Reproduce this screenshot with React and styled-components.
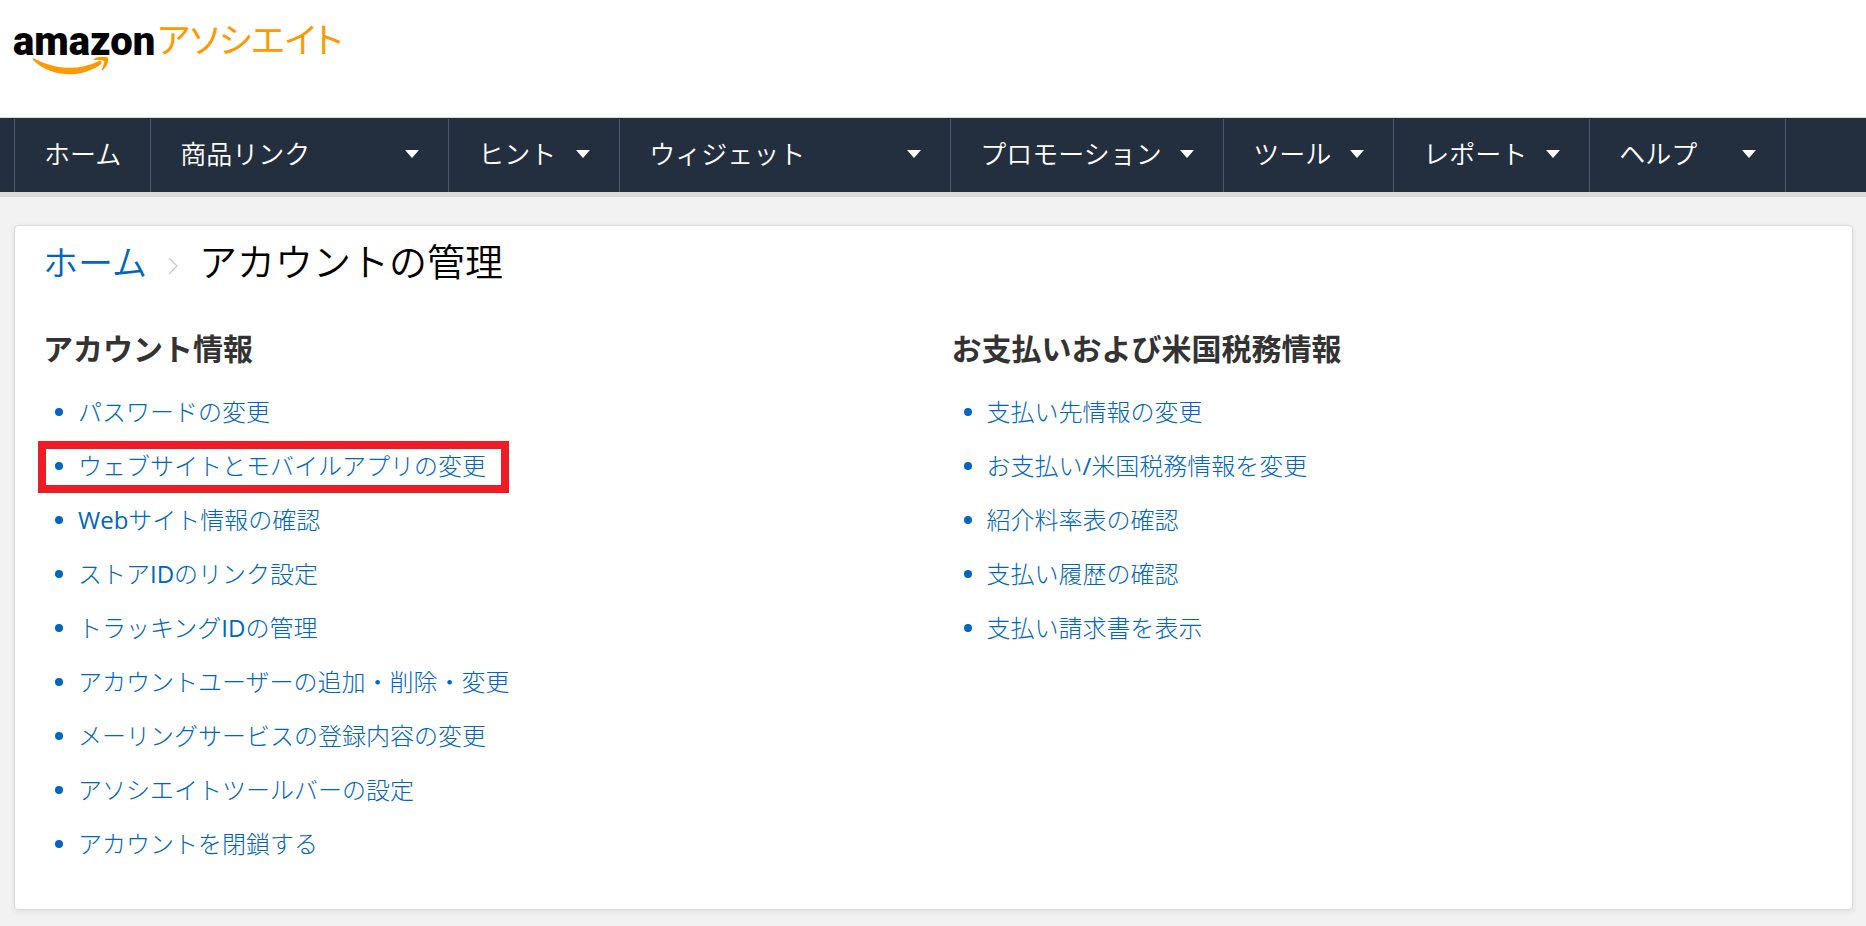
import React from 'react';
import styled, { createGlobalStyle, css } from 'styled-components';

const GlobalStyle = createGlobalStyle`
  * {
    box-sizing: border-box;
  }

  body {
    margin: 0;
    background-color: #f2f2f2;
    color: #333;
    font-family: 'Noto Sans', 'Noto Sans CJK JP', sans-serif;
    font-weight: 350;
  }
`;

const Header = styled.header`
  height: 118px;
  padding: 12px 13px;
  background-color: #fff;
  border-bottom: 1px solid #d5d9d9;
`;

const LogoLink = styled.a`
  display: inline-flex;
  align-items: flex-start;
  gap: 2px;
  text-decoration: none;
`;

const Wordmark = styled.span`
  position: relative;
  color: #000;
  font-family: Roboto, 'Liberation Sans', sans-serif;
  font-size: 40px;
  font-weight: 900;
  line-height: 60px;
`;

const Smile = styled.svg`
  position: absolute;
  left: 20px;
  top: 45px;
  width: 78px;
  height: 20px;
`;

const LogoSuffix = styled.span`
  color: #ff9900;
  font-family: 'Noto Sans CJK JP', sans-serif;
  font-size: 35px;
  font-weight: 400;
  font-feature-settings: 'palt';
  line-height: 52px;
`;

const Nav = styled.nav`
  display: flex;
  height: 79px;
  padding: 1px 0 0 14px;
  background-color: #232f3e;
  border-bottom: 5px solid #d9dad9;
`;

const navItem = css`
  display: flex;
  flex: 0 0 ${props => props.$width}px;
  align-items: center;
  justify-content: space-between;
  padding: 0 29px 4px;
  border: 0;
  border-left: 1px solid #4a5b71;
  background: none;
  color: #fff;
  font-family: inherit;
  font-size: 26px;
  font-weight: 350;
  line-height: 36px;
  white-space: nowrap;
  text-decoration: none;
  cursor: pointer;
`;

const NavLink = styled.a`
  ${navItem}
`;

const NavButton = styled.button`
  ${navItem}
`;

const NavEnd = styled.div`
  border-left: 1px solid #4a5b71;
`;

const Caret = styled.span`
  border: 7px solid transparent;
  border-top: 8px solid #fff;
  border-bottom: 0;
`;

const Card = styled.main`
  margin: 28px 13px 16px 14px;
  padding: 7px 30px 38px 28px;
  background-color: #fff;
  border: 1px solid #d9dada;
  border-radius: 4px;
  box-shadow: 0 2px 6px rgba(0, 0, 0, 0.08);
`;

const Breadcrumb = styled.nav`
  display: flex;
  align-items: baseline;
  line-height: 56px;
`;

const CrumbLink = styled.a`
  color: #0066c0;
  font-size: 35px;
  text-decoration: none;
`;

const Chevron = styled.svg`
  align-self: center;
  width: 10px;
  height: 18px;
  margin: 8px 21px 0;
`;

const PageTitle = styled.h1`
  margin: 0;
  color: #000;
  font-size: 38px;
  font-weight: 350;
`;

const Columns = styled.div`
  display: grid;
  grid-template-columns: 1fr 1fr;
  gap: 38px;
  margin-top: 38px;
`;

const SectionTitle = styled.h2`
  margin: 0 0 16px;
  font-size: 30px;
  font-weight: 700;
  line-height: 40px;
`;

const LinkList = styled.ul`
  margin: 0;
  padding: 0 0 0 12px;
  list-style: none;
`;

const LinkItem = styled.li`
  position: relative;
  display: flex;
  align-items: center;
  gap: 15px;
  width: fit-content;
  height: 54px;
  color: #0066c0;

  &::before {
    content: '';
    width: 8px;
    height: 8px;
    border-radius: 50%;
    background-color: #0066c0;
  }

  ${props => props.$marked && css`
    &::after {
      content: '';
      position: absolute;
      inset: 2px -23px 0 -17px;
      border: 8px solid #ee1c25;
      pointer-events: none;
    }
  `}
`;

// Regular latin letters next to light kana and kanji
const ItemLink = styled.a`
  color: inherit;
  font-family: 'Open Sans', 'Noto Sans CJK JP Light', 'Noto Sans CJK JP', sans-serif;
  font-size: 24px;
  font-weight: 400;
  line-height: 36px;
  text-decoration: none;
`;

const menuItems = [
  { label: '商品リンク', width: 298 },
  { label: 'ヒント', width: 171 },
  { label: 'ウィジェット', width: 331 },
  { label: 'プロモーション', width: 273 },
  { label: 'ツール', width: 170 },
  { label: 'レポート', width: 196 },
  { label: 'ヘルプ', width: 196 }
];

const sections = [
  {
    title: 'アカウント情報',
    links: [
      { label: 'パスワードの変更' },
      { label: 'ウェブサイトとモバイルアプリの変更', marked: true },
      { label: 'Webサイト情報の確認' },
      { label: 'ストアIDのリンク設定' },
      { label: 'トラッキングIDの管理' },
      { label: 'アカウントユーザーの追加・削除・変更' },
      { label: 'メーリングサービスの登録内容の変更' },
      { label: 'アソシエイトツールバーの設定' },
      { label: 'アカウントを閉鎖する' }
    ]
  },
  {
    title: 'お支払いおよび米国税務情報',
    links: [
      { label: '支払い先情報の変更' },
      { label: 'お支払い/米国税務情報を変更' },
      { label: '紹介料率表の確認' },
      { label: '支払い履歴の確認' },
      { label: '支払い請求書を表示' }
    ]
  }
];

const Logo = () => (
  <LogoLink href="#">
    <Wordmark>
      amazon
      <Smile viewBox="0 0 78 20" aria-hidden="true">
        <path
          d="M0 1 Q-1 2 1 4 C20 21 48 21 67 8 C70 6 68 3 66 4 C46 14 22 13 0 1 Z"
          fill="#ff9900"
        />
        <path
          d="M61 2 C65 -1 74 -1 75 1 C76 4 74 10 70 13 C69 14 68 13 69 12 C70 9 72 5 71 4 C70 3 66 3 62 3 C61 3 60 3 61 2 Z"
          fill="#ff9900"
        />
      </Smile>
    </Wordmark>
    <LogoSuffix>アソシエイト</LogoSuffix>
  </LogoLink>
);

const App = () => {
  return (
    <div lang="ja">
      <GlobalStyle />
      <Header>
        <Logo />
      </Header>

      <Nav>
        <NavLink href="#" $width={136}>ホーム</NavLink>
        {menuItems.map((item) => (
          <NavButton key={item.label} type="button" $width={item.width}>
            {item.label}
            <Caret />
          </NavButton>
        ))}
        <NavEnd />
      </Nav>

      <Card>
        <Breadcrumb>
          <CrumbLink href="#">ホーム</CrumbLink>
          <Chevron viewBox="0 0 10 18" aria-hidden="true">
            <path d="M1 1 L9 9 L1 17" fill="none" stroke="#c8c8c8" strokeWidth="1.3" />
          </Chevron>
          <PageTitle>アカウントの管理</PageTitle>
        </Breadcrumb>

        <Columns>
          {sections.map((section) => (
            <section key={section.title}>
              <SectionTitle>{section.title}</SectionTitle>
              <LinkList>
                {section.links.map((link) => (
                  <LinkItem key={link.label} $marked={link.marked}>
                    <ItemLink href="#">{link.label}</ItemLink>
                  </LinkItem>
                ))}
              </LinkList>
            </section>
          ))}
        </Columns>
      </Card>
    </div>
  );
};

export default App;
